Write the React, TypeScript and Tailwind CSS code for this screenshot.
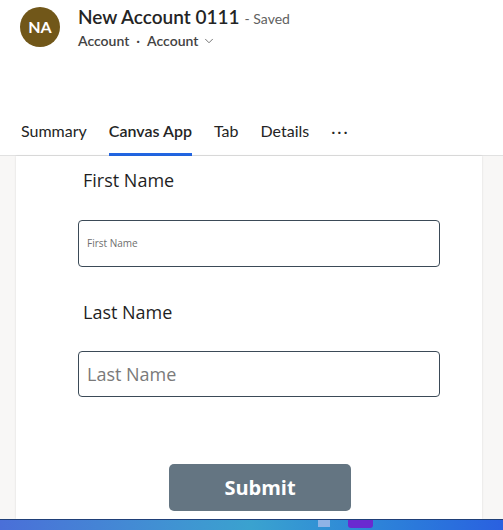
import { ChevronDown } from 'lucide-react';

const tabs = ['Summary', 'Canvas App', 'Tab', 'Details'];

export default function App() {
  return (
    <div className="w-[503px] h-[530px] overflow-hidden bg-white flex flex-col" style={{ fontFamily: '"Segoe UI", Lato, "Noto Sans", sans-serif' }}>
      {/* record header */}
      <div className="h-[110px] flex items-start pl-[20px] pt-[7px] gap-[18px]">
        <div className="w-[40px] h-[40px] rounded-full bg-[#715719] flex items-center justify-center text-white text-[16px] font-bold">
          NA
        </div>
        <div className="flex flex-col -mt-[2px]">
          <div className="flex items-baseline gap-[5px] leading-[24px]">
            <span className="text-[19px] font-semibold text-[#242424]">New Account 0111</span>
            <span className="text-[14px] text-[#616161]">- Saved</span>
          </div>
          <div className="flex items-center text-[14px] font-semibold text-[#424242] leading-[18px] mt-[1px]">
            <span>Account</span>
            <span className="mx-[7px]">·</span>
            <span>Account</span>
            <ChevronDown className="w-[14px] h-[14px] ml-[4px] text-[#616161]" strokeWidth={1.5} />
          </div>
        </div>
      </div>

      {/* tabs */}
      <div className="h-[46px] flex items-stretch pl-[21px] gap-[22px] border-b border-[#e1e1e1] text-[16px] text-[#242424]">
        {tabs.map((t) => (
          <div
            key={t}
            className={
              t === 'Canvas App'
                ? 'flex items-center font-semibold border-b-[3px] border-[#2266e3] pb-[1px] -mb-px'
                : 'flex items-center pb-[4px]'
            }
          >
            {t}
          </div>
        ))}
        <div className="flex items-center pb-[4px] text-[16px] tracking-[2px]">···</div>
      </div>

      {/* canvas app frame */}
      <div className="flex-1 bg-[#f8f7f6] flex pl-[16px] pr-[21px]">
        <div className="flex-1 bg-white shadow-[0_0_2px_rgba(0,0,0,0.12)] flex flex-col pl-[62px]" style={{ fontFamily: '"Open Sans", sans-serif' }}>
          <div className="mt-[12px] ml-[5px] text-[18px] leading-[24px] text-[#1f1f1f]">First Name</div>
          <div className="mt-[28px] w-[362px] h-[47px] border border-[#3b4a57] rounded-[4px] flex items-center px-[8px] text-[10px] text-[#6e6e6e]">
            First Name
          </div>
          <div className="mt-[33px] ml-[5px] text-[18px] leading-[24px] text-[#1f1f1f]">Last Name</div>
          <div className="mt-[27px] w-[362px] h-[46px] border border-[#3b4a57] rounded-[4px] flex items-center px-[8px] text-[18px] text-[#7a7a7a]">
            Last Name
          </div>
          <div className="mt-[67px] ml-[91px] w-[182px] h-[47px] rounded-[5px] bg-[#647582] flex items-center justify-center text-white text-[20px] font-bold">
            Submit
          </div>
        </div>
      </div>

      {/* taskbar strip */}
      <div className="h-[11px] border-t border-[#1f3f78] bg-gradient-to-r from-[#4a6fd8] via-[#3aa2cf] to-[#2a60e0] relative">
        <div className="absolute left-[318px] top-0 w-[12px] h-[7px] bg-[#8fb3e6]" />
        <div className="absolute left-[348px] top-0 w-[25px] h-[8px] rounded-b-[3px] bg-[#6a2ad0]" />
      </div>
    </div>
  );
}
